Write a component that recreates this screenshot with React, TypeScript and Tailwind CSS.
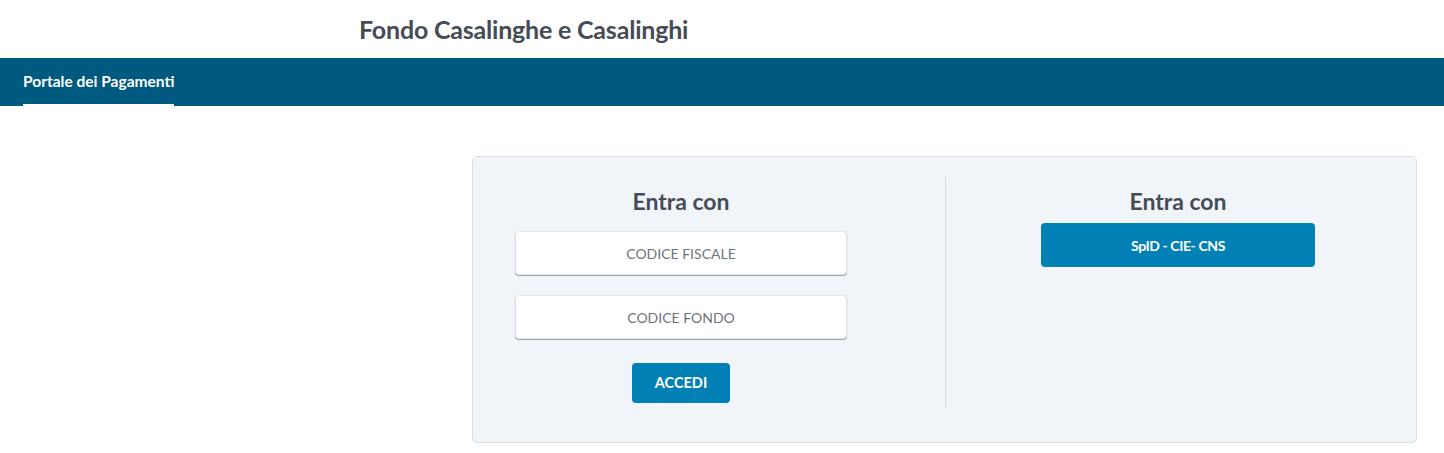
import React from "react";

export default function App() {
  const font = { fontFamily: "Lato, 'Noto Sans', sans-serif" };
  return (
    <div className="w-[1444px] h-[453px] bg-white overflow-hidden" style={font}>
      <header className="h-[58px] flex items-center pl-[359px]">
        <h1 className="text-[25px] font-bold text-[#454c55] tracking-[-0.2px] leading-none">
          Fondo Casalinghe e Casalinghi
        </h1>
      </header>
      <nav className="h-[48px] bg-[#005a80] flex px-[23px]">
        <div className="flex flex-col justify-between">
          <span className="pt-[13px] text-[15.5px] font-bold text-white leading-[20px]">
            Portale dei Pagamenti
          </span>
          <span className="block h-[2px] bg-white" />
        </div>
      </nav>
      <main className="pt-[50px] pl-[472px]">
        <div className="w-[945px] h-[287px] bg-[#f1f5f9] border border-[#dddfe2] rounded-[5px] pt-[20px] pb-[34px] flex">
          <div className="w-[473px] border-r border-[#d8dadd] flex flex-col items-center pl-[42px] pr-[98px]">
            <h2 className="mt-[10px] text-[23px] font-bold text-[#454c55] leading-[28px]">Entra con</h2>
            <div className="mt-[16px] w-[332px] h-[44px] bg-white rounded-[4px] border border-[#e2e4e7] shadow-[0_1px_1px_rgba(0,0,0,0.35)] flex items-center justify-center text-[14px] text-[#6e747c]">
              CODICE FISCALE
            </div>
            <div className="mt-[20px] w-[332px] h-[44px] bg-white rounded-[4px] border border-[#e2e4e7] shadow-[0_1px_1px_rgba(0,0,0,0.35)] flex items-center justify-center text-[14px] text-[#6e747c]">
              CODICE FONDO
            </div>
            <button className="mt-[24px] w-[98px] h-[40px] bg-[#0080b4] rounded-[4px] text-white text-[14.5px] font-bold">
              ACCEDI
            </button>
          </div>
          <div className="flex-1 flex flex-col items-center pl-[2px] pr-[8px]">
            <h2 className="mt-[10px] text-[23px] font-bold text-[#454c55] leading-[28px]">Entra con</h2>
            <button className="mt-[8px] w-[274px] h-[44px] bg-[#0080b4] rounded-[4px] text-white text-[14px] tracking-[-0.4px] font-bold">
              SpID - CIE- CNS
            </button>
          </div>
        </div>
      </main>
    </div>
  );
}
